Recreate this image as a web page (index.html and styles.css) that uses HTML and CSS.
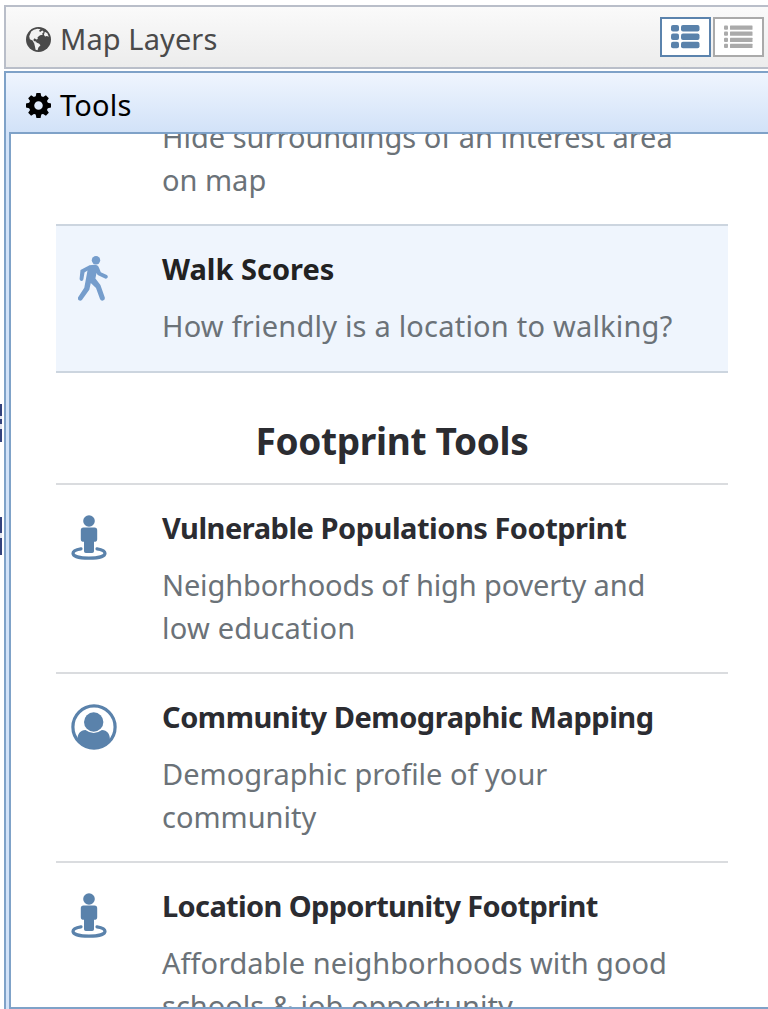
FILE: index.html
```
<!DOCTYPE html>
<html lang="en">

<head>
    <meta charset="UTF-8">
    <meta name="viewport" content="width=device-width, initial-scale=1.0">
    <title>Tools</title>
    <link rel="stylesheet" href="styles.css">
</head>

<body>
    <svg class="defs" width="0" height="0">
        <symbol id="person" viewBox="0 0 36 46">
            <circle cx="18" cy="6" r="5.8" />
            <path d="M12.500 12.500h11q2.700 0 2.700 2.700v9q0 2.600-3.200 2.600v9.400q0 1.800-1.800 1.800h-6.400q-1.800 0-1.800-1.800v-9.400q-3.200 0-3.200-2.600v-9q0-2.700 2.700-2.700z" />
            <path d="M10 33.800C5 34.600 2 36 2 38.200c0 3 6.600 5 16 5s16-2 16-5c0-2.200-3-3.600-8-4.400" fill="none" stroke="currentColor" stroke-width="3.200" stroke-linecap="round" />
        </symbol>
    </svg>

    <div class="sidebar">
        <div class="header">
            <svg class="header-icon" viewBox="0 0 24 24">
                <circle cx="12" cy="12" r="12" />
                <path class="land" d="M5 4.200L7.500 2.600l3.500-1 3 .6-1.500 1.500 1 1.200 2.200-1.500 1.400 1.400-1.500 1.200.4 1.500-2.500.3-2.400 2.100.2 1.600-1.400.5-1.700-1.200-1.200 1.600 1 1.300 1.500.1.800 1.400L7.500 15l-1.200-2-2.600-1.300-.6-2.900z" />
                <path class="land" d="M13.500 12.200l3.500-1 1.800-1.800 2.700.6 1 2.800-.7 3.200-2 3.200-2.500 1.500.2-3-1.200-2.700-2-.6z" fill-opacity="0" />
                <path class="land" d="M7.500 14.500l2.500.3 2.700 1.200 1.200 1.500-2 2.200-.8 2.600-1.900-.5-.6-3.200z" />
                <path class="land" d="M17.200 7.400l.9-2.800 2.400 1.500 1.400 3.200-1.900-.7-1.700.5z" />
            </svg>
            <span class="header-text layers-text">Map Layers</span>
            <div class="view-buttons">
                <div class="view-btn selected">
                    <svg width="29" height="24" viewBox="0 0 29 24">
                        <rect x="0" y="0" width="8" height="6.500" rx="2" />
                        <rect x="10" y="0" width="18.500" height="6.500" rx="2" />
                        <rect x="0" y="8.500" width="8" height="6.500" rx="2" />
                        <rect x="10" y="8.500" width="18.500" height="6.500" rx="2" />
                        <rect x="0" y="16.800" width="8" height="6.500" rx="2" />
                        <rect x="10" y="16.800" width="18.500" height="6.500" rx="2" />
                    </svg>
                </div>
                <div class="view-btn">
                    <svg width="29" height="24" viewBox="0 0 29 24">
                        <rect x="0" y="0.500" width="4" height="4.300" rx="1" />
                        <rect x="6" y="0.500" width="22.500" height="4.300" rx=".5" />
                        <rect x="0" y="6.500" width="4" height="4.300" rx="1" />
                        <rect x="6" y="6.500" width="22.500" height="4.300" rx=".5" />
                        <rect x="0" y="12.700" width="4" height="4.300" rx="1" />
                        <rect x="6" y="12.700" width="22.500" height="4.300" rx=".5" />
                        <rect x="0" y="18.800" width="4" height="4.300" rx="1" />
                        <rect x="6" y="18.800" width="22.500" height="4.300" rx=".5" />
                    </svg>
                </div>
            </div>
        </div>

        <div class="tools">
            <div class="header header-open">
                <svg class="header-icon" viewBox="0 0 24 24">
                    <circle cx="12" cy="12" r="6.700" fill="none" stroke="currentColor" stroke-width="5.200" />
                    <g>
                        <path id="tooth" d="M9.200 4L10 0h4l.8 4z" />
                        <use href="#tooth" transform="rotate(45 12 12)" />
                        <use href="#tooth" transform="rotate(90 12 12)" />
                        <use href="#tooth" transform="rotate(135 12 12)" />
                        <use href="#tooth" transform="rotate(180 12 12)" />
                        <use href="#tooth" transform="rotate(225 12 12)" />
                        <use href="#tooth" transform="rotate(270 12 12)" />
                        <use href="#tooth" transform="rotate(315 12 12)" />
                    </g>
                </svg>
                <span class="header-text tools-text">Tools</span>
            </div>

            <div class="panel">
                <div class="list">
                    <div class="item item-cut">
                        <div class="icon"></div>
                        <p class="desc">Hide surroundings of an interest area<br>on map</p>
                    </div>
                    <div class="item item-hover">
                        <div class="icon">
                            <svg class="walk" width="30" height="46" viewBox="0 0 30 46">
                                <circle cx="18" cy="4.200" r="4.200" />
                                <path d="M11.500 9.300L16.500 8.700q3.600 0 4.500 3l1.800 4.600 6 2.800q1.500.9.800 2.500-.8 1.500-2.500.9l-7.400-3.400-1.200-2-1.100 5.500 5 6.400 4.400 12.500q.4 2.600-1.800 3.100-2.200.4-3-1.700l-4-10.900-5.200-5-1.500 6.700-7.200 10q-1.500 1.700-3.300.5-1.700-1.300-.5-3.200l6-9.300 3.200-17.200-3 2-1.100 6.800q-.4 1.800-2.100 1.600-1.900-.3-1.700-2.200l.9-8.800z" />
                            </svg>
                        </div>
                        <div class="text">
                            <h4>Walk Scores</h4>
                            <p class="desc d-walk">How friendly is a location to walking?</p>
                        </div>
                    </div>

                    <h2>Footprint Tools</h2>

                    <div class="item">
                        <div class="icon"><svg width="36" height="46"><use href="#person" /></svg></div>
                        <div class="text">
                            <h4 class="t-vulnerable">Vulnerable Populations Footprint</h4>
                            <p class="desc d-vulnerable">Neighborhoods of high poverty and<br><span>low education</span></p>
                        </div>
                    </div>
                    <div class="item">
                        <div class="icon">
                            <svg width="46" height="46" viewBox="0 0 46 46">
                                <circle cx="23" cy="23" r="21.100" fill="none" stroke="currentColor" stroke-width="3.200" />
                                <circle cx="22.700" cy="18" r="9.700" />
                                <path d="M6.500 36c-.3-6 2.800-9.800 8-10q8.200 6 16.400 0c5.200.2 8.300 4 8 10q-6 8.500-16.200 8.500T6.500 36z" />
                            </svg>
                        </div>
                        <div class="text">
                            <h4 class="t-community">Community Demographic Mapping</h4>
                            <p class="desc">Demographic profile of your<br>community</p>
                        </div>
                    </div>
                    <div class="item">
                        <div class="icon"><svg width="36" height="46"><use href="#person" /></svg></div>
                        <div class="text">
                            <h4 class="t-location">Location Opportunity Footprint</h4>
                            <p class="desc">Affordable neighborhoods with good<br>schools &amp; job opportunity</p>
                        </div>
                    </div>
                </div>
            </div>
        </div>
    </div>

    <div class="map-bit bit-one"></div>
    <div class="map-bit bit-two"></div>
</body>

</html>
```
FILE: styles.css
```
* {
    box-sizing: border-box;
}

body {
    margin: 0;
    height: 1009px;
    overflow: hidden;
    background-color: white;
    font-family: "Noto Sans", sans-serif;
}

svg {
    display: block;
    fill: currentColor;
}

.defs {
    position: absolute;
}

.sidebar {
    height: 1009px;
    padding: 5px 0 0 4px;
    display: flex;
    flex-direction: column;
    gap: 2px;
}

.header {
    height: 64px;
    flex-shrink: 0;
    display: flex;
    align-items: center;
    padding: 4px 4px 0 20px;
    border: 2px solid #b9bec9;
    border-right: none;
    background: linear-gradient(#fafafa, #ececec);
    color: #4a4a4a;
}

.header-icon {
    width: 25px;
    height: 25px;
    margin-right: 9px;
}

.land {
    fill: #f3f3f3;
}

.header-text {
    font-size: 29px;
    line-height: 40px;
    margin-top: -1px;
}

.layers-text {
    letter-spacing: 0.1px;
}

.tools-text {
    letter-spacing: 0.2px;
}

.view-buttons {
    display: flex;
    gap: 2px;
    margin: 6px 0 0 auto;
    align-self: flex-start;
}

.view-btn {
    width: 51px;
    height: 40px;
    display: flex;
    align-items: center;
    justify-content: center;
    border: 2px solid #aaa;
    background-color: white;
    color: #aaa;
}

.view-btn.selected {
    border-color: #5b83ad;
    color: #5a82ab;
}

.tools {
    flex: 1;
    min-height: 0;
    display: flex;
    flex-direction: column;
    padding-left: 3px;
    border: 2px solid #7fa2c8;
    border-right: none;
    border-bottom: none;
    background-color: #d3e3f8;
}

.header-open {
    height: 59px;
    margin-left: -3px;
    padding-top: 6px;
    border: none;
    background: linear-gradient(#eff5fe, #d2e2f8);
    color: black;
}

.panel {
    flex: 1;
    min-height: 0;
    overflow: hidden;
    border: 2px solid #7fa2c8;
    border-right: none;
    padding: 0 40px 0 45px;
    background-color: white;
}

.item {
    display: flex;
    height: 189px;
    padding-top: 22px;
    border-top: 2px solid #dadcdf;
    color: #5a82ab;
}

.icon {
    width: 106px;
    flex-shrink: 0;
    padding: 8px 0 0 15px;
}

.text {
    white-space: nowrap;
}

.item-cut {
    height: 108px;
    margin-top: -18px;
    padding: 0;
    border: none;
    white-space: nowrap;
}

.item-hover {
    height: 149px;
    border-bottom: 2px solid #ccd5df;
    border-top-color: #ccd5df;
    background-color: #eff5fd;
    color: #759dcc;
}

.item-hover h4 {
    color: #222;
}

.walk {
    margin-left: 7px;
}

h2 {
    margin: 0;
    height: 110px;
    padding-top: 42px;
    text-align: center;
    font-size: 37px;
    line-height: 52px;
    letter-spacing: -0.33px;
    color: #2b2c31;
}

h4 {
    margin: 0 0 15px;
    font-size: 29px;
    line-height: 42px;
    color: #2b2c31;
}

.desc {
    margin: 0;
    font-size: 29px;
    line-height: 42.5px;
    color: #6b7278;
}

.d-walk {
    letter-spacing: 0.21px;
}

.t-vulnerable {
    letter-spacing: -0.48px;
}

.d-vulnerable {
    letter-spacing: -0.14px;
}

.d-vulnerable span {
    letter-spacing: 0.22px;
}

.t-community {
    letter-spacing: -0.46px;
}

.t-location {
    letter-spacing: -0.64px;
}

/* map labels showing at the left edge */
.map-bit {
    position: absolute;
    left: 0;
    width: 2px;
    height: 38px;
    background: linear-gradient(#34427c 12px, #dfe3ee 12px 15px, #34427c 15px 20px, #dfe3ee 20px 25px, #34427c 25px);
}

.bit-one {
    top: 404px;
}

.bit-two {
    top: 517px;
    background: linear-gradient(#34427c 16px, #dfe3ee 16px 21px, #34427c 21px);
}
```
